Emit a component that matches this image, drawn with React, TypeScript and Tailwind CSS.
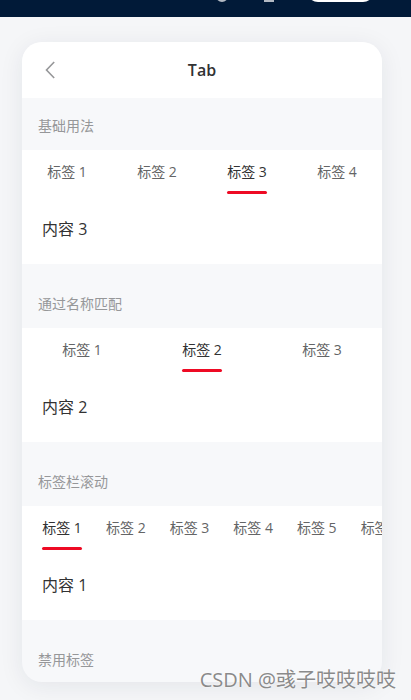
import React from "react";

const font = "font-['Open_Sans','Noto_Sans_CJK_SC',sans-serif]";

function Tabs({
  labels,
  active,
  scroll = false,
}: {
  labels: string[];
  active: number;
  scroll?: boolean;
}) {
  return (
    <div className="bg-white">
      <div className={scroll ? "flex overflow-hidden px-[8px]" : "flex"}>
        {labels.map((label, i) => (
          <div
            key={i}
            className={
              (scroll ? "shrink-0 px-[12px] " : "flex-1 ") +
              "flex h-[44px] flex-col items-center pt-[12px]"
            }
          >
            <span
              className={
                "whitespace-nowrap text-[14px] leading-[20px] " +
                (i === active ? "text-[#323233]" : "text-[#646566]")
              }
            >
              {label}
            </span>
            {i === active && (
              <span className="mt-[9px] h-[3px] w-[40px] rounded-[3px] bg-[#ee0a24]" />
            )}
          </div>
        ))}
      </div>
      <div className="px-[20px] py-[24px] text-[16px] leading-[22px] text-[#323233]">
        内容 {active + 1}
      </div>
    </div>
  );
}

function Title({ children, first = false }: { children: React.ReactNode; first?: boolean }) {
  return (
    <h2
      className={
        "px-[16px] pb-[16px] text-[14px] font-normal leading-[16px] text-[#969799] " +
        (first ? "pt-[20px]" : "pt-[32px]")
      }
    >
      {children}
    </h2>
  );
}

export default function App() {
  const four = ["标签 1", "标签 2", "标签 3", "标签 4"];
  const three = ["标签 1", "标签 2", "标签 3"];
  const many = ["标签 1", "标签 2", "标签 3", "标签 4", "标签 5", "标签 6", "标签 7", "标签 8"];

  return (
    <div className={`relative h-[700px] w-[411px] overflow-hidden bg-[#f5f6f8] ${font}`}>
      {/* top site bar, mostly scrolled out */}
      <div className="relative h-[17px] overflow-hidden bg-[#011a38]">
        <span className="absolute left-[216px] top-[-10px] h-[12px] w-[12px] rounded-full border-2 border-white/70" />
        <span className="absolute left-[264px] top-[-10px] h-[12px] w-[10px] border-b-2 border-white/70" />
        <span className="absolute left-[307px] top-[-20px] h-[22px] w-[67px] rounded-full bg-white" />
      </div>

      <div className="ml-[22px] mt-[25px] h-[640px] w-[360px] overflow-hidden rounded-[20px] bg-[#f7f8fa] shadow-[0_4px_24px_rgba(30,40,60,0.08)]">
        <div className="relative flex h-[56px] items-center justify-center bg-white">
          <svg
            className="absolute left-[23px] top-[19px]"
            width="10"
            height="18"
            viewBox="0 0 10 18"
            fill="none"
          >
            <path d="M9.2 1 L1.5 9 L9.2 17" stroke="#969799" strokeWidth="1.6" />
          </svg>
          <span className="text-[16px] font-semibold text-[#323233]">Tab</span>
        </div>

        <Title first>基础用法</Title>
        <Tabs labels={four} active={2} />

        <Title>通过名称匹配</Title>
        <Tabs labels={three} active={1} />

        <Title>标签栏滚动</Title>
        <Tabs labels={many} active={0} scroll />

        <Title>禁用标签</Title>
      </div>

      <div className="absolute right-[15px] top-[667px] text-[20px] leading-[26px] text-[#8a8a8a] [text-shadow:0_0_2px_#fff]">
        CSDN @彧子吱吱吱吱
      </div>
    </div>
  );
}
